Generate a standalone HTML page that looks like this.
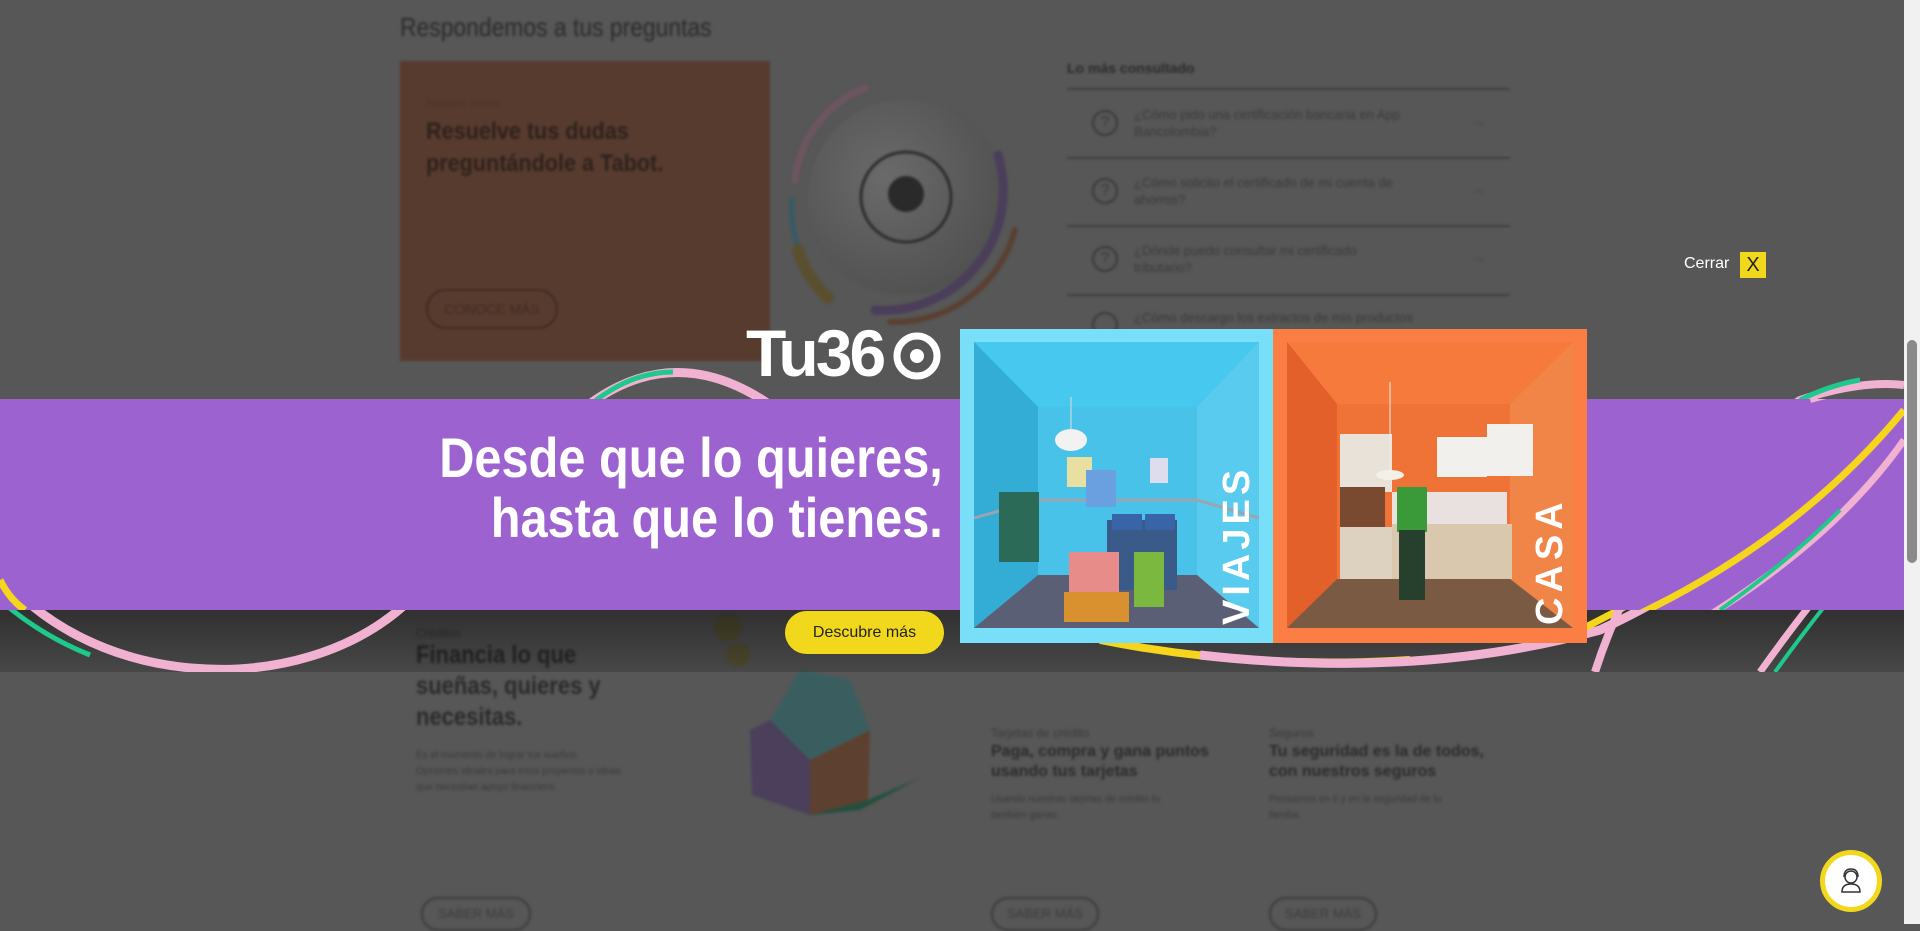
<!DOCTYPE html>
<html><head><meta charset="utf-8"><style>
*{margin:0;padding:0;box-sizing:border-box}
body{width:1920px;height:924px;overflow:hidden;background:#575757;font-family:"Liberation Sans",sans-serif;position:relative}
.a{position:absolute}
.dt{color:#2b2b2b}
.n{display:inline-block;transform-origin:left top;white-space:nowrap}
#bg{position:absolute;left:0;top:0;width:1920px;height:924px;filter:blur(1.3px)}
</style></head><body>
<div id="bg">
<div class="a dt" style="left:400px;top:12px;font-size:26px;"><span class="n" style="transform:scaleX(.88)">Respondemos a tus preguntas</span></div>
<div class="a" style="left:400px;top:61px;width:370px;height:300px;background:#583b2f"></div>
<div class="a" style="left:426px;top:96px;font-size:12px;color:#4a3228">Háblale ahora</div>
<div class="a" style="left:426px;top:116px;font-size:24px;font-weight:bold;color:#2e211b;line-height:32px"><span class="n" style="transform:scaleX(.9)">Resuelve tus dudas<br>preguntándole a Tabot.</span></div>
<div class="a" style="left:426px;top:289px;width:132px;height:40px;border:2px solid #3e2a22;border-radius:20px;color:#3e2a22;font-size:14px;text-align:center;line-height:36px">CONOCE MÁS</div>
<svg class="a" style="left:770px;top:70px" width="270" height="280" viewBox="0 0 270 280">
<defs><radialGradient id="g" cx=".4" cy=".4" r=".7"><stop offset="0" stop-color="#6a6a6a"/><stop offset="1" stop-color="#4e4e4e"/></radialGradient></defs>
<circle cx="136" cy="127" r="98" fill="url(#g)"/>
<circle cx="136" cy="127" r="45" fill="none" stroke="#2d2d2d" stroke-width="3"/>
<circle cx="136" cy="124" r="18" fill="#2a2a2a"/>
<path d="M25 110 A112 112 0 0 1 95 18" fill="none" stroke="#6d5560" stroke-width="7" stroke-linecap="round"/>
<path d="M22 130 A115 115 0 0 0 60 225" fill="none" stroke="#355a64" stroke-width="5" stroke-linecap="round"/>
<path d="M28 180 A115 115 0 0 0 58 228" fill="none" stroke="#5a5030" stroke-width="12" stroke-linecap="round"/>
<path d="M228 85 A120 120 0 0 1 105 240" fill="none" stroke="#4b3e5a" stroke-width="9" stroke-linecap="round"/>
<path d="M245 160 A125 125 0 0 1 120 252" fill="none" stroke="#5a4032" stroke-width="6" stroke-linecap="round"/>
</svg>
<div class="a dt" style="left:1067px;top:60px;font-size:14px;font-weight:bold">Lo más consultado</div>
<div class="a" style="left:1067px;top:88px;width:443px;height:2px;background:#3f3f3f"></div>
<div class="a" style="left:1067px;top:157px;width:443px;height:2px;background:#3f3f3f"></div>
<div class="a" style="left:1067px;top:225px;width:443px;height:2px;background:#3f3f3f"></div>
<div class="a" style="left:1067px;top:294px;width:443px;height:2px;background:#3f3f3f"></div>
<div class="a" style="left:1092px;top:110px;width:26px;height:26px;border:2px solid #3a3a3a;border-radius:50%;color:#3a3a3a;font-size:16px;text-align:center;line-height:22px">?</div>
<div class="a" style="left:1092px;top:178px;width:26px;height:26px;border:2px solid #3a3a3a;border-radius:50%;color:#3a3a3a;font-size:16px;text-align:center;line-height:22px">?</div>
<div class="a" style="left:1092px;top:246px;width:26px;height:26px;border:2px solid #3a3a3a;border-radius:50%;color:#3a3a3a;font-size:16px;text-align:center;line-height:22px">?</div>
<div class="a" style="left:1092px;top:312px;width:26px;height:26px;border:2px solid #3a3a3a;border-radius:50%"></div>
<div class="a" style="left:1134px;top:106px;font-size:13px;color:#3a3a3a;line-height:17px">¿Cómo pido una certificación bancaria en App<br>Bancolombia?</div>
<div class="a" style="left:1134px;top:174px;font-size:13px;color:#3a3a3a;line-height:17px">¿Cómo solicito el certificado de mi cuenta de<br>ahorros?</div>
<div class="a" style="left:1134px;top:242px;font-size:13px;color:#3a3a3a;line-height:17px">¿Dónde puedo consultar mi certificado<br>tributario?</div>
<div class="a" style="left:1134px;top:309px;font-size:13px;color:#3a3a3a;line-height:17px">¿Cómo descargo los extractos de mis productos</div>
<div class="a" style="left:1470px;top:113px;font-size:16px;color:#444">→</div>
<div class="a" style="left:1470px;top:181px;font-size:16px;color:#444">→</div>
<div class="a" style="left:1470px;top:249px;font-size:16px;color:#444">→</div>

<div class="a" style="left:416px;top:626px;font-size:12px;color:#3a3a3a">Créditos</div>
<div class="a dt" style="left:416px;top:640px;font-size:25px;font-weight:bold;line-height:31px"><span class="n" style="transform:scaleX(.88)">Financia lo que<br>sueñas, quieres y<br>necesitas.</span></div>
<div class="a" style="left:416px;top:748px;font-size:10px;color:#3a3a3a;line-height:16px">Es el momento de lograr tus sueños.<br>Opciones ideales para esos proyectos o ideas<br>que necesitan apoyo financiero.</div>
<svg class="a" style="left:700px;top:610px" width="240" height="210">
<circle cx="28" cy="18" r="13" fill="#5a5535"/><circle cx="38" cy="45" r="12" fill="#5a5535"/>
<path d="M100 60 L150 70 L170 120 L110 150 L70 110Z" fill="#3a5e60"/>
<path d="M70 110 L110 150 L110 205 L52 185 L50 120Z" fill="#4b3f5c"/>
<path d="M110 150 L170 120 L168 190 L110 205Z" fill="#5d4030"/>
<path d="M110 205 L168 190 L220 168 L160 200Z" fill="#22503c"/>
</svg>
<div class="a" style="left:991px;top:726px;font-size:12px;color:#3a3a3a">Tarjetas de crédito</div>
<div class="a dt" style="left:991px;top:742px;font-size:16px;font-weight:bold;line-height:20px">Paga, compra y gana puntos<br>usando tus tarjetas</div>
<div class="a" style="left:991px;top:792px;font-size:10px;color:#3a3a3a;line-height:16px">Usando nuestras tarjetas de crédito tu<br>también ganas.</div>
<div class="a" style="left:1269px;top:726px;font-size:12px;color:#3a3a3a">Seguros</div>
<div class="a dt" style="left:1269px;top:742px;font-size:16px;font-weight:bold;line-height:20px">Tu seguridad es la de todos,<br>con nuestros seguros</div>
<div class="a" style="left:1269px;top:792px;font-size:10px;color:#3a3a3a;line-height:16px">Pensamos en ti y en la seguridad de tu<br>familia.</div>
<div class="a" style="left:421px;top:897px;width:110px;height:34px;border:2px solid #3c3c3c;border-radius:17px;color:#3c3c3c;font-size:13px;text-align:center;line-height:30px">SABER MÁS</div>
<div class="a" style="left:991px;top:897px;width:108px;height:34px;border:2px solid #3c3c3c;border-radius:17px;color:#3c3c3c;font-size:13px;text-align:center;line-height:30px">SABER MÁS</div>
<div class="a" style="left:1269px;top:897px;width:108px;height:34px;border:2px solid #3c3c3c;border-radius:17px;color:#3c3c3c;font-size:13px;text-align:center;line-height:30px">SABER MÁS</div>
</div>

<div class="a" style="left:0;top:610px;width:1904px;height:62px;background:linear-gradient(rgba(0,0,0,.45),rgba(0,0,0,.18))"></div>
<svg class="a" style="left:0;top:330px" width="1904" height="342" viewBox="0 330 1904 342">
<path d="M570 420 Q675 325 790 420" fill="none" stroke="#f1b2d1" stroke-width="9"/>
<path d="M590 405 Q630 372 673 372" fill="none" stroke="#1ec98c" stroke-width="5"/>
<path d="M-10 560 C80 690 300 705 410 600" fill="none" stroke="#f1b2d1" stroke-width="9"/>
<path d="M0 600 Q40 635 90 655" fill="none" stroke="#1ec98c" stroke-width="5"/>
<path d="M1100 640 Q1250 670 1410 660" fill="none" stroke="#f5d61c" stroke-width="8"/>
<path d="M1200 655 Q1420 680 1600 630 Q1750 560 1900 420" fill="none" stroke="#f1b2d1" stroke-width="9"/>
<path d="M1580 630 Q1760 540 1904 415" fill="none" stroke="#f5d61c" stroke-width="7"/>
<path d="M1595 672 Q1650 500 1800 400 Q1860 380 1904 385" fill="none" stroke="#f1b2d1" stroke-width="8"/>
<path d="M1800 400 Q1830 385 1860 380" fill="none" stroke="#1ec98c" stroke-width="5"/>
<path d="M1760 672 Q1840 560 1904 500" fill="none" stroke="#f1b2d1" stroke-width="7"/>
<path d="M1775 672 Q1845 575 1904 515" fill="none" stroke="#1ec98c" stroke-width="4"/>
</svg>
<div class="a" style="left:0;top:399px;width:1904px;height:211px;background:#9c63d0"></div>
<svg class="a" style="left:1500px;top:399px" width="404" height="211" viewBox="1500 399 404 211">
<path d="M1580 640 Q1780 560 1904 410" fill="none" stroke="#f5d61c" stroke-width="7"/>
<path d="M1640 655 Q1820 560 1904 440" fill="none" stroke="#f1b2d1" stroke-width="7"/>
<path d="M1720 610 Q1790 560 1840 510" fill="none" stroke="#1ec98c" stroke-width="4"/>
<path d="M1810 399 Q1860 385 1904 390" fill="none" stroke="#f1b2d1" stroke-width="8"/>
</svg>
<svg class="a" style="left:0;top:560px" width="40" height="50"><path d="M0 20 Q10 40 25 50" fill="none" stroke="#f5d61c" stroke-width="7"/></svg>

<div class="a" style="left:746px;top:318px;color:#fff;font-size:66px;font-weight:bold;line-height:70px;letter-spacing:-3px">Tu36</div>
<svg class="a" style="left:891px;top:330px" width="52" height="52"><circle cx="26" cy="26" r="20" fill="none" stroke="#fff" stroke-width="7"/><circle cx="26" cy="26" r="7" fill="#fff"/></svg>
<div class="a" style="right:977px;top:428px;color:#fff;font-size:56px;font-weight:bold;line-height:60px;text-align:right;white-space:nowrap;transform:scaleX(.87);transform-origin:right top">Desde que lo quieres,<br>hasta que lo tienes.</div>
<div class="a" style="left:785px;top:611px;width:159px;height:43px;background:#f2d81c;border-radius:22px;color:#222;font-size:16px;text-align:center;line-height:43px">Descubre más</div>

<div class="a" style="left:960px;top:329px;width:313px;height:314px;background:#79dff8"></div>
<svg class="a" style="left:974px;top:342px" width="285" height="286" viewBox="0 0 285 286">
<rect width="285" height="286" fill="#3fc0e6"/>
<path d="M0 0 H285 L223 65 H64Z" fill="#47c8ee"/>
<path d="M0 0 L64 65 V233 L0 286Z" fill="#33acd6"/>
<path d="M285 0 L223 65 V233 L285 286Z" fill="#58cbee"/>
<rect x="64" y="65" width="159" height="168" fill="#49c2e9"/>
<path d="M64 233 H223 L285 286 H0Z" fill="#5b5f76"/>
<path d="M0 176 L64 158 H223 L285 176" fill="none" stroke="#9aa5b0" stroke-width="3"/>
<ellipse cx="97" cy="98" rx="16" ry="11" fill="#f2f2f2"/>
<line x1="97" y1="55" x2="97" y2="88" stroke="#ddd"/>
<rect x="93" y="115" width="25" height="30" fill="#e8e0a0"/><rect x="112" y="128" width="30" height="37" fill="#6aa0e0"/>
<rect x="176" y="116" width="18" height="25" fill="#dde"/>
<rect x="25" y="150" width="40" height="70" fill="#2c6a58"/>
<rect x="133" y="178" width="70" height="70" fill="#3a5a8a"/>
<rect x="138" y="172" width="30" height="16" fill="#3a64a8"/><rect x="171" y="172" width="30" height="16" fill="#3a64a8"/>
<rect x="160" y="210" width="30" height="55" fill="#7ab840"/>
<rect x="95" y="210" width="50" height="40" fill="#e88c8a"/>
<rect x="90" y="250" width="65" height="30" fill="#d9902e"/>
<text x="275" y="283" transform="rotate(-90 275 283)" fill="#fff" font-family="Liberation Sans" font-weight="bold" font-size="38" letter-spacing="4">VIAJES</text>
</svg>
<div class="a" style="left:1273px;top:329px;width:314px;height:314px;background:#fb7e45"></div>
<svg class="a" style="left:1287px;top:342px" width="286" height="286" viewBox="0 0 286 286">
<rect width="286" height="286" fill="#ec6a33"/>
<path d="M0 0 H286 L223 62 H50Z" fill="#f57a3c"/>
<path d="M0 0 L50 62 V237 L0 286Z" fill="#e4602a"/>
<path d="M286 0 L223 62 V237 L286 286Z" fill="#f18447"/>
<rect x="50" y="62" width="173" height="175" fill="#ef7236"/>
<path d="M50 237 H223 L286 286 H0Z" fill="#7b5a44"/>
<rect x="53" y="92" width="52" height="58" fill="#e8e2d8"/>
<rect x="53" y="145" width="45" height="40" fill="#7a4a30"/>
<rect x="53" y="185" width="52" height="52" fill="#ddd2c0"/>
<rect x="105" y="182" width="120" height="55" fill="#d9c7ae"/>
<rect x="150" y="95" width="50" height="40" fill="#f2f0ec"/><rect x="200" y="82" width="46" height="52" fill="#f2f0ec"/>
<rect x="105" y="150" width="115" height="32" fill="#e9e0e0"/>
<rect x="110" y="145" width="30" height="45" fill="#3a9a3a"/>
<rect x="112" y="188" width="26" height="70" fill="#27402e"/>
<ellipse cx="103" cy="133" rx="14" ry="5" fill="#f4f0e8"/>
<line x1="103" y1="40" x2="103" y2="130" stroke="#eee"/>
<text x="275" y="283" transform="rotate(-90 275 283)" fill="#fff" font-family="Liberation Sans" font-weight="bold" font-size="38" letter-spacing="5">CASA</text>
</svg>

<div class="a" style="left:1684px;top:255px;color:#fff;font-size:16px">Cerrar</div>
<div class="a" style="left:1740px;top:252px;width:26px;height:26px;background:#f2d81c;color:#222;font-size:20px;text-align:center;line-height:26px">X</div>

<div class="a" style="left:1820px;top:850px;width:62px;height:62px;border-radius:50%;background:#fff;border:5px solid #f2d81c"></div>
<svg class="a" style="left:1836px;top:866px" width="30" height="30" viewBox="0 0 30 30"><circle cx="15" cy="11" r="6" fill="none" stroke="#333" stroke-width="1.5"/><path d="M6 26 Q6 18 15 18 Q24 18 24 26Z" fill="none" stroke="#333" stroke-width="1.5"/><path d="M8 11 Q8 3 15 3 Q22 3 22 11" fill="none" stroke="#333" stroke-width="1.5"/></svg>

<div class="a" style="left:1904px;top:0;width:16px;height:924px;background:#f1f1f1"></div>
<div class="a" style="left:1907px;top:340px;width:10px;height:223px;background:#8a8a8a;border-radius:5px"></div>
</body></html>
